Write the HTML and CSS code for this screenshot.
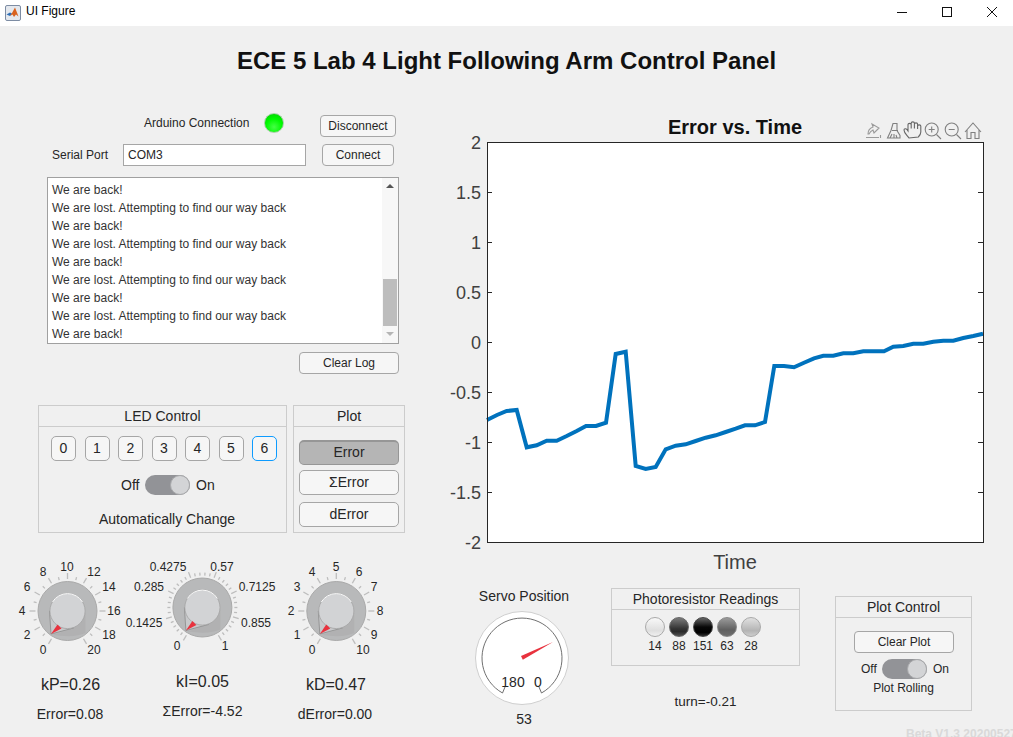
FILE: index.html
```html
<!DOCTYPE html>
<html lang="en">
<head>
<meta charset="utf-8">
<title>UI Figure</title>
<link rel="stylesheet" href="styles.css">
</head>
<body>
<div class="window">
  <header class="titlebar">
    <svg class="app-icon" width="16" height="16" viewBox="0 0 16 16">
      <rect x="0.5" y="0.5" width="15" height="15" rx="1.5" class="app-frame"/>
      <path d="M1.5 9.5 L5 7.5 L7 8.5 L5 11 Z" class="app-blue"/>
      <path d="M5 11 L7 8 L10 2.5 L13.5 11.5 L11 9.5 L9 12 L7.5 9.5 Z" class="app-orange"/>
    </svg>
    <span class="app-name">UI Figure</span>
    <div class="win-controls">
      <div class="win-btn"><svg width="12" height="12" viewBox="0 0 12 12"><path d="M1 6.5H11" class="win-glyph"/></svg></div>
      <div class="win-btn"><svg width="12" height="12" viewBox="0 0 12 12"><rect x="1.5" y="1.5" width="9" height="9" class="win-glyph"/></svg></div>
      <div class="win-btn"><svg width="12" height="12" viewBox="0 0 12 12"><path d="M1 1L11 11M11 1L1 11" class="win-glyph"/></svg></div>
    </div>
  </header>

  <main class="app">
    <h1 class="app-title">ECE 5 Lab 4 Light Following Arm Control Panel</h1>
    <div class="columns">
      <section class="left">
        <div class="conn-row">
          <span class="conn-label">Arduino Connection</span>
          <span class="led"></span>
          <button class="btn btn-disconnect">Disconnect</button>
        </div>
        <div class="port-row">
          <span class="port-label">Serial Port</span>
          <div class="port-input">COM3</div>
          <button class="btn btn-connect">Connect</button>
        </div>
        <div class="log">
          <div class="log-lines">
            <div>We are back!</div>
            <div>We are lost. Attempting to find our way back</div>
            <div>We are back!</div>
            <div>We are lost. Attempting to find our way back</div>
            <div>We are back!</div>
            <div>We are lost. Attempting to find our way back</div>
            <div>We are back!</div>
            <div>We are lost. Attempting to find our way back</div>
            <div>We are back!</div>
          </div>
          <div class="scrollbar">
            <span class="arrow-up"></span>
            <span class="thumb"></span>
            <span class="arrow-down"></span>
          </div>
        </div>
        <button class="btn btn-clearlog">Clear Log</button>

        <div class="panels">
          <div class="panel panel-led">
            <div class="panel-head">LED Control</div>
            <div class="num-row">
              <button class="num">0</button>
              <button class="num">1</button>
              <button class="num">2</button>
              <button class="num">3</button>
              <button class="num">4</button>
              <button class="num">5</button>
              <button class="num num-focus">6</button>
            </div>
            <div class="switch-row">
              <span class="sw-off">Off</span>
              <span class="switch"><span class="switch-thumb"></span></span>
              <span class="sw-on">On</span>
            </div>
            <div class="auto-label">Automatically Change</div>
          </div>
          <div class="panel panel-plot">
            <div class="panel-head">Plot</div>
            <div class="plot-btns">
              <button class="btn-lg btn-active">Error</button>
              <button class="btn-lg">ΣError</button>
              <button class="btn-lg btn-last">dError</button>
            </div>
          </div>
        </div>

        <div class="knobs">
          <div class="knob-col knob-col-p">
            <svg class="knob-svg" width="135" height="110" viewBox="0 550 135 110">
              <defs>
                <g id="ticks-ten">
                  <line class="tick" y1="-32" y2="-38" transform="rotate(-150)"/>
                  <line class="tick" y1="-32" y2="-35" transform="rotate(-135)"/>
                  <line class="tick" y1="-32" y2="-38" transform="rotate(-120)"/>
                  <line class="tick" y1="-32" y2="-35" transform="rotate(-105)"/>
                  <line class="tick" y1="-32" y2="-38" transform="rotate(-90)"/>
                  <line class="tick" y1="-32" y2="-35" transform="rotate(-75)"/>
                  <line class="tick" y1="-32" y2="-38" transform="rotate(-60)"/>
                  <line class="tick" y1="-32" y2="-35" transform="rotate(-45)"/>
                  <line class="tick" y1="-32" y2="-38" transform="rotate(-30)"/>
                  <line class="tick" y1="-32" y2="-35" transform="rotate(-15)"/>
                  <line class="tick" y1="-32" y2="-38"/>
                  <line class="tick" y1="-32" y2="-35" transform="rotate(15)"/>
                  <line class="tick" y1="-32" y2="-38" transform="rotate(30)"/>
                  <line class="tick" y1="-32" y2="-35" transform="rotate(45)"/>
                  <line class="tick" y1="-32" y2="-38" transform="rotate(60)"/>
                  <line class="tick" y1="-32" y2="-35" transform="rotate(75)"/>
                  <line class="tick" y1="-32" y2="-38" transform="rotate(90)"/>
                  <line class="tick" y1="-32" y2="-35" transform="rotate(105)"/>
                  <line class="tick" y1="-32" y2="-38" transform="rotate(120)"/>
                  <line class="tick" y1="-32" y2="-35" transform="rotate(135)"/>
                  <line class="tick" y1="-32" y2="-38" transform="rotate(150)"/>
                </g>
                <g id="knob-body">
                  <circle r="29.5" class="knob-ring"/>
                  <path d="M18 2 L18 22 Q8 27 -15 24 L5 17.5 Z" class="knob-shade"/>
                  <path d="M-18 0 L-16.5 23 L6 17 Z" class="knob-wedge"/>
                  <circle r="17.6" class="knob-cap"/>
                  <path d="M-15 -9 A17.6 17.6 0 0 1 15 -9" class="knob-light"/>
                  <path d="M-16.5 23 L-10 13.5 L-6 17.5 Z" class="knob-pointer"/>
                </g>
              </defs>
              <use href="#ticks-ten" x="67.5" y="611"/>
              <use href="#knob-body" x="67.5" y="611"/>
              <g class="knob-text">
                <text x="43" y="654">0</text>
                <text x="27" y="639">2</text>
                <text x="22" y="615">4</text>
                <text x="27" y="591">6</text>
                <text x="43" y="576">8</text>
                <text x="67" y="571">10</text>
                <text x="94" y="576">12</text>
                <text x="109" y="591">14</text>
                <text x="114" y="615">16</text>
                <text x="109" y="639">18</text>
                <text x="94" y="654">20</text>
              </g>
            </svg>
            <div class="knob-value">kP=0.26</div>
            <div class="knob-error">Error=0.08</div>
          </div>

          <div class="knob-col knob-col-i">
            <svg class="knob-svg" width="135" height="110" viewBox="135 550 135 110">
              <g transform="translate(202.4 607.5)">
                <line class="tick" y1="-32" y2="-38" transform="rotate(-150)"/>
                <line class="tick" y1="-32" y2="-35" transform="rotate(-141.43)"/>
                <line class="tick" y1="-32" y2="-35" transform="rotate(-132.86)"/>
                <line class="tick" y1="-32" y2="-35" transform="rotate(-124.29)"/>
                <line class="tick" y1="-32" y2="-35" transform="rotate(-115.71)"/>
                <line class="tick" y1="-32" y2="-38" transform="rotate(-107.14)"/>
                <line class="tick" y1="-32" y2="-35" transform="rotate(-98.57)"/>
                <line class="tick" y1="-32" y2="-35" transform="rotate(-90)"/>
                <line class="tick" y1="-32" y2="-35" transform="rotate(-81.43)"/>
                <line class="tick" y1="-32" y2="-35" transform="rotate(-72.86)"/>
                <line class="tick" y1="-32" y2="-38" transform="rotate(-64.29)"/>
                <line class="tick" y1="-32" y2="-35" transform="rotate(-55.71)"/>
                <line class="tick" y1="-32" y2="-35" transform="rotate(-47.14)"/>
                <line class="tick" y1="-32" y2="-35" transform="rotate(-38.57)"/>
                <line class="tick" y1="-32" y2="-35" transform="rotate(-30)"/>
                <line class="tick" y1="-32" y2="-38" transform="rotate(-21.43)"/>
                <line class="tick" y1="-32" y2="-35" transform="rotate(-12.86)"/>
                <line class="tick" y1="-32" y2="-35" transform="rotate(-4.29)"/>
                <line class="tick" y1="-32" y2="-35" transform="rotate(4.29)"/>
                <line class="tick" y1="-32" y2="-35" transform="rotate(12.86)"/>
                <line class="tick" y1="-32" y2="-38" transform="rotate(21.43)"/>
                <line class="tick" y1="-32" y2="-35" transform="rotate(30)"/>
                <line class="tick" y1="-32" y2="-35" transform="rotate(38.57)"/>
                <line class="tick" y1="-32" y2="-35" transform="rotate(47.14)"/>
                <line class="tick" y1="-32" y2="-35" transform="rotate(55.71)"/>
                <line class="tick" y1="-32" y2="-38" transform="rotate(64.29)"/>
                <line class="tick" y1="-32" y2="-35" transform="rotate(72.86)"/>
                <line class="tick" y1="-32" y2="-35" transform="rotate(81.43)"/>
                <line class="tick" y1="-32" y2="-35" transform="rotate(90)"/>
                <line class="tick" y1="-32" y2="-35" transform="rotate(98.57)"/>
                <line class="tick" y1="-32" y2="-38" transform="rotate(107.14)"/>
                <line class="tick" y1="-32" y2="-35" transform="rotate(115.71)"/>
                <line class="tick" y1="-32" y2="-35" transform="rotate(124.29)"/>
                <line class="tick" y1="-32" y2="-35" transform="rotate(132.86)"/>
                <line class="tick" y1="-32" y2="-35" transform="rotate(141.43)"/>
                <line class="tick" y1="-32" y2="-38" transform="rotate(150)"/>
              </g>
              <use href="#knob-body" x="202.4" y="607.5"/>
              <g class="knob-text">
                <text x="177" y="650">0</text>
                <text x="144" y="627">0.1425</text>
                <text x="149" y="591">0.285</text>
                <text x="168" y="571">0.4275</text>
                <text x="222" y="571">0.57</text>
                <text x="257" y="591">0.7125</text>
                <text x="256" y="627">0.855</text>
                <text x="225" y="650">1</text>
              </g>
            </svg>
            <div class="knob-value">kI=0.05</div>
            <div class="knob-error">ΣError=-4.52</div>
          </div>

          <div class="knob-col knob-col-d">
            <svg class="knob-svg" width="135" height="110" viewBox="270 550 135 110">
              <use href="#ticks-ten" x="336.3" y="611"/>
              <use href="#knob-body" x="336.3" y="611"/>
              <g class="knob-text">
                <text x="312" y="654">0</text>
                <text x="297" y="639">1</text>
                <text x="291" y="615">2</text>
                <text x="297" y="591">3</text>
                <text x="312" y="576">4</text>
                <text x="336" y="571">5</text>
                <text x="359" y="576">6</text>
                <text x="374" y="591">7</text>
                <text x="380" y="615">8</text>
                <text x="374" y="639">9</text>
                <text x="363" y="654">10</text>
              </g>
            </svg>
            <div class="knob-value">kD=0.47</div>
            <div class="knob-error">dError=0.00</div>
          </div>
        </div>
      </section>

      <section class="right">
        <svg class="plot" width="563" height="481" viewBox="450 105 563 481">
          <rect x="487" y="142" width="496" height="400.5" class="plot-bg"/>
          <polyline class="curve" points="487,420 497,415 506.7,411 516.7,410 526.7,447.3 536.7,445.3 546.7,440.7 556.7,440.7 566.7,436 576.7,431 586,426 596,426 606,422.7 615.7,354 625.7,351.7 635.7,466 645.7,469 655.7,467 665.7,449.3 675.7,445.7 685.7,444.3 695.7,441 705.7,437.7 715.7,435.3 725.7,432 735.7,428.7 745,425.3 755,425.3 765,422 774.3,366 784,366 794,367.3 804,362.7 814,358.3 823.3,355.7 833.3,355.7 843.3,353.3 853.3,353.3 863.3,351.3 873.3,351.3 884,351.3 893.3,346.7 903.3,346 913.3,343.7 923.3,343.7 933.3,341.7 943.3,340.7 953.3,340.7 963.3,338 973.3,336 983,333.7"/>
          <rect x="487.5" y="142.5" width="496" height="400" class="plot-frame"/>
          <path class="plot-ticks" d="M487 192.5h5M487 242.5h5M487 292.5h5M487 342.5h5M487 392.5h5M487 442.5h5M487 492.5h5M983 192.5h-5M983 242.5h-5M983 292.5h-5M983 342.5h-5M983 392.5h-5M983 442.5h-5M983 492.5h-5"/>
          <g class="y-labels">
            <text x="481" y="149">2</text>
            <text x="481" y="199">1.5</text>
            <text x="481" y="249">1</text>
            <text x="481" y="299">0.5</text>
            <text x="481" y="349">0</text>
            <text x="481" y="399">-0.5</text>
            <text x="481" y="449">-1</text>
            <text x="481" y="499">-1.5</text>
            <text x="481" y="549">-2</text>
          </g>
          <text x="735" y="134" class="plot-title">Error vs. Time</text>
          <text x="735" y="569" class="plot-xlabel">Time</text>
          <g class="toolbar">
            <path class="tool-light" d="M866 137.500h13M880.500 135v3M868 134c0-4 2-6 5-7l-1-3 7 4-5 5-1-3c-2 1-3 2-4 4z"/>
            <path d="M893 123.500h4v7l3 5v2.500h-12.500l3.500-7.500zM892 130.500h6M890 138l2-4M894 138v-4M897 138l-1-3"/>
            <path class="tool-dark" d="M909 138c-2-3-5-5-5-8 0-1.500 2-1.500 3-.5l1 1.500v-6.500c0-1.500 3.200-1.500 3.200 0v4-5.500c0-1.500 3.200-1.500 3.200 0v5.500-4.500c0-1.500 3.200-1.500 3.200 0v5-3c0-1.500 3.200-1.500 3.200 0v6c0 2-1.500 4-2.500 5z"/>
            <circle cx="931.700" cy="129.500" r="6.500"/>
            <path d="M928.700 129.500h6M931.700 126.500v6M936.500 134.500l4.500 4.500"/>
            <circle cx="951.700" cy="129.500" r="6.500"/>
            <path d="M948.700 129.500h6M956.500 134.500l4.500 4.500"/>
            <path d="M965 132l8-9 8 9M967 130v8.500h4v-6h4v6h4v-8.500"/>
          </g>
        </svg>

        <div class="bottom">
          <div class="servo">
            <div class="servo-title">Servo Position</div>
            <svg class="gauge" width="108" height="100" viewBox="470 608 108 100">
              <circle cx="522" cy="658" r="46.500" class="gauge-face"/>
              <path d="M505 687 L502.500 693 A40 40 0 1 1 541.500 693 L539 687" class="gauge-arc"/>
              <polygon points="521,656 522.800,659.800 553,642" class="gauge-needle"/>
              <text x="513" y="687" class="gauge-text">180</text>
              <text x="538" y="687" class="gauge-text">0</text>
            </svg>
            <div class="servo-value">53</div>
          </div>

          <div class="photo">
            <div class="panel panel-photo">
              <div class="panel-head">Photoresistor Readings</div>
              <div class="lamps">
                <div class="lamp-col"><span class="lamp lamp-14"></span><span class="lamp-num">14</span></div>
                <div class="lamp-col"><span class="lamp lamp-88"></span><span class="lamp-num">88</span></div>
                <div class="lamp-col"><span class="lamp lamp-151"></span><span class="lamp-num">151</span></div>
                <div class="lamp-col"><span class="lamp lamp-63"></span><span class="lamp-num">63</span></div>
                <div class="lamp-col"><span class="lamp lamp-28"></span><span class="lamp-num">28</span></div>
              </div>
            </div>
            <div class="turn">turn=-0.21</div>
          </div>

          <div class="control">
            <div class="panel panel-control">
              <div class="panel-head">Plot Control</div>
              <button class="btn btn-clearplot">Clear Plot</button>
              <div class="switch-row switch-row-small">
                <span class="sw-off">Off</span>
                <span class="switch"><span class="switch-thumb"></span></span>
                <span class="sw-on">On</span>
              </div>
              <div class="rolling">Plot Rolling</div>
            </div>
            <div class="beta">Beta V1.3 20200527</div>
          </div>
        </div>
      </section>
    </div>
  </main>
</div>
</body>
</html>
```

FILE: styles.css
```css
* { box-sizing: border-box; }
html, body { margin: 0; padding: 0; }
body {
  font-family: "Liberation Sans", Arial, sans-serif;
  font-size: 12px;
  color: #262626;
}
button { font-family: inherit; padding: 0; margin: 0; color: #262626; }

.window {
  width: 1013px;
  height: 737px;
  overflow: hidden;
  display: flex;
  flex-direction: column;
  background: #f0f0f0;
}

/* Title bar */
.titlebar {
  height: 26px;
  flex: none;
  background: #fff;
  display: flex;
  align-items: center;
  padding: 0 0 4px 5px;
}
.app-icon { margin-top: 3px; }
.app-name { margin-left: 5px; font-size: 12px; color: #000; }
.win-controls { margin: 1px -1px 0 auto; display: flex; }
.win-btn { width: 45px; height: 20px; display: flex; align-items: center; justify-content: center; }
.win-glyph { fill: none; stroke: #111; stroke-width: 1; }
.app-frame { fill: #e4e8ee; stroke: #7d8ca3; }
.app-blue { fill: #2f6fb5; }
.app-orange { fill: #d9621e; }

/* Main */
.app { flex: 1; min-height: 0; }
.app-title {
  margin: 0;
  height: 79px;
  padding-top: 15px;
  line-height: 40px;
  font-size: 24px;
  font-weight: bold;
  text-align: center;
  color: #111;
}
.columns { display: flex; }
.left { width: 450px; flex: none; }
.right { width: 563px; flex: none; }

/* Buttons */
.btn {
  height: 22px;
  display: block;
  background: #f6f6f6;
  border: 1px solid #a6a6a6;
  border-radius: 4px;
  font-size: 12px;
}
.btn-disconnect { width: 76px; margin-left: 36px; }
.btn-connect { width: 72px; margin-left: 16px; }
.btn-clearlog { width: 100px; margin: 8px 0 0 299px; }
.btn-clearplot { width: 100px; margin: 13px 0 0 18px; }

/* Connection rows */
.conn-row { display: flex; height: 22px; margin-top: 10px; padding-left: 144px; }
.conn-label { width: 120px; height: 20px; line-height: 20px; margin-top: -2px; }
.led {
  width: 20px;
  height: 20px;
  margin-top: -2px;
  border-radius: 50%;
  border: 1px solid #a8cfa8;
  background: radial-gradient(circle at 50% 72%, #45ff45 0%, #00fa00 50%, #00cc00 100%);
}
.port-row { display: flex; height: 22px; margin-top: 7px; padding-left: 52px; align-items: center; }
.port-label { width: 71px; }
.port-input {
  width: 183px;
  height: 22px;
  line-height: 20px;
  padding-left: 4px;
  background: #fff;
  border: 1px solid #a6a6a6;
}

/* Log */
.log {
  display: flex;
  width: 352px;
  height: 167px;
  margin: 11px 0 0 47px;
  background: #fff;
  border: 1px solid #a0a0a0;
}
.log-lines { flex: 1; padding: 3px 0 0 4px; line-height: 18px; color: #333; overflow: hidden; }
.scrollbar {
  width: 16px;
  display: flex;
  flex-direction: column;
  align-items: center;
  background: #f7f7f7;
}
.arrow-up, .arrow-down { width: 0; height: 0; border-left: 4px solid transparent; border-right: 4px solid transparent; }
.arrow-up { margin-top: 6px; border-bottom: 4px solid #555; }
.arrow-down { margin-top: 6px; border-top: 4px solid #b5b5b5; }
.thumb { width: 14px; height: 47px; margin-top: 91px; background: #bdbdbd; }

/* Panels */
.panels { display: flex; gap: 6px; margin: 31px 0 0 38px; }
.panel { border: 1px solid #cccccc; }
.panel-head {
  height: 21px;
  line-height: 20px;
  font-size: 14px;
  text-align: center;
  border-bottom: 1px solid #cccccc;
}
.panel-led { width: 249px; height: 128px; }
.panel-plot { width: 112px; height: 128px; }

.num-row { display: flex; gap: 8.5px; padding: 9px 0 0 12px; }
.num {
  width: 25px;
  height: 25px;
  padding-bottom: 1px;
  font-size: 14px;
  background: #f6f6f6;
  border: 1px solid #a6a6a6;
  border-radius: 5px;
}
.num-focus { border-color: #0d9bff; }

.switch-row { display: flex; align-items: center; height: 20px; margin: 14px 0 0 82px; font-size: 14px; }
.sw-off { width: 24px; }
.switch {
  width: 45px;
  height: 20px;
  display: flex;
  justify-content: flex-end;
  background: #929397;
  border-radius: 10px;
}
.switch-thumb {
  width: 20px;
  height: 20px;
  border-radius: 50%;
  background: #d3d4d6;
  border: 1px solid #a8a9ab;
}
.sw-on { margin-left: 6px; }
.auto-label {
  margin-top: 14px;
  padding-left: 9px;
  line-height: 20px;
  font-size: 14px;
  text-align: center;
}

.plot-btns { padding: 13px 0 0 5px; }
.btn-lg {
  display: block;
  width: 100px;
  height: 25px;
  margin-bottom: 5px;
  padding-bottom: 2px;
  font-size: 14px;
  background: #f6f6f6;
  border: 1px solid #a6a6a6;
  border-radius: 5px;
}
.btn-active { background: #b5b5b5; border-color: #969696; border-top-width: 2px; }
.btn-last { margin-top: 7px; }

/* Knobs */
.knobs { display: flex; margin-top: 17px; }
.knob-col { width: 135px; text-align: center; }
.knob-svg { display: block; overflow: visible; }
.tick { stroke: #bdbdbd; stroke-width: 1.3; }
.knob-ring { fill: #b8b9ba; stroke: #a9a9a9; stroke-width: 1; }
.knob-shade { fill: #b1b1b2; }
.knob-wedge { fill: #c8c9cb; stroke: #8a8a8a; stroke-width: 0.8; }
.knob-cap { fill: #d2d3d5; stroke: #a3a3a3; stroke-width: 0.8; }
.knob-light { fill: none; stroke: #fafafa; stroke-width: 1; }
.knob-pointer { fill: #e8323e; }
.knob-text text { font-size: 12px; text-anchor: middle; fill: #262626; }
.knob-value { margin-top: 13px; height: 24px; line-height: 24px; font-size: 16px; }
.knob-error { margin-top: 7px; line-height: 20px; font-size: 14px; }
.knob-col-p .knob-value { padding-left: 6px; }
.knob-col-p .knob-error { padding-left: 5px; }
.knob-col-i .knob-value { margin-top: 10px; margin-bottom: 3px; }
.knob-col-d .knob-value { padding-right: 3px; }
.knob-col-d .knob-error { padding-right: 5px; }

/* Plot */
.plot { display: block; }
.plot-bg { fill: #fff; }
.plot-frame { fill: none; stroke: #262626; stroke-width: 1; }
.plot-ticks { fill: none; stroke: #262626; stroke-width: 1; }
.curve { fill: none; stroke: #0072bd; stroke-width: 4; stroke-linejoin: miter; }
.y-labels text { font-size: 18px; text-anchor: end; fill: #404040; }
.plot-title { font-size: 20px; font-weight: bold; text-anchor: middle; fill: #111; }
.plot-xlabel { font-size: 20px; text-anchor: middle; fill: #404040; }
.toolbar { fill: none; stroke: #808080; stroke-width: 1.1; }
.tool-light { stroke: #9a9a9a; }
.tool-dark { stroke: #666; }

/* Bottom widgets */
.bottom { display: flex; align-items: flex-start; }
.servo { flex: none; width: 108px; margin-left: 20px; text-align: center; }
.servo-title { line-height: 20px; font-size: 14px; }
.gauge { display: block; margin-top: 2px; }
.gauge-face { fill: #fff; stroke: #cfcfcf; stroke-width: 1; }
.gauge-arc { fill: none; stroke: #707070; stroke-width: 1; }
.gauge-needle { fill: #e8323e; }
.gauge-text { font-size: 14px; text-anchor: middle; fill: #262626; }
.servo-value { margin-top: 1px; line-height: 20px; font-size: 14px; }

.photo { flex: none; width: 189px; margin: 2px 0 0 33px; }
.panel-photo { height: 78px; }
.lamps { display: flex; padding: 7px 0 0 33px; gap: 4px; }
.lamp-col { width: 20px; display: flex; flex-direction: column; align-items: center; }
.lamp { width: 20px; height: 20px; border-radius: 50%; border: 1px solid #a9a9a9; }
.lamp-num { margin-top: 1px; line-height: 16px; white-space: nowrap; }
.lamp-14 { background: linear-gradient(#f8f8f8, #dedede 70%, #f0f0f0); }
.lamp-88 { background: linear-gradient(#7a7a7a, #333 60%, #2a2a2a 75%, #505050); border-color: #666; }
.lamp-151 { background: linear-gradient(#666, #080808 50%, #000 80%, #2c2c2c); border-color: #444; }
.lamp-63 { background: linear-gradient(#9a9a9a, #606060 65%, #6e6e6e); border-color: #888; }
.lamp-28 { background: linear-gradient(#e0e0e0, #b4b4b4 70%, #cdcdcd); }
.turn { margin-top: 26px; line-height: 20px; font-size: 13.5px; text-align: center; }

.control { flex: none; margin: 10px 0 0 35px; }
.panel-control { width: 137px; height: 115px; }
.panel-control .btn-clearplot { margin-left: 18px; }
.switch-row-small { margin: 6px 0 0 25px; font-size: 12px; }
.switch-row-small .sw-off { width: 21px; }
.rolling { line-height: 18px; text-align: center; }
.beta {
  margin: 16px 0 0 71px;
  white-space: nowrap;
  font-size: 12px;
  font-weight: bold;
  color: #d9d9d9;
}
```
